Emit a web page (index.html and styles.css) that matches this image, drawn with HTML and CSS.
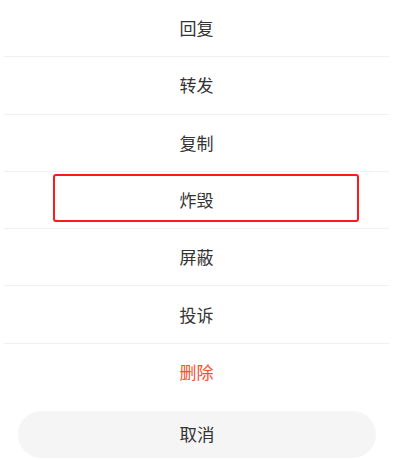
FILE: index.html
```html
<!DOCTYPE html>
<html lang="zh-CN">
<head>
<meta charset="utf-8">
<link rel="stylesheet" href="styles.css">
</head>
<body>
<div class="sheet">
  <ul class="menu">
    <li class="item">回复</li>
    <li class="item">转发</li>
    <li class="item">复制</li>
    <li class="item">炸毁</li>
    <li class="item">屏蔽</li>
    <li class="item">投诉</li>
    <li class="item danger">删除</li>
  </ul>
  <div class="cancel">取消</div>
  <div class="highlight"></div>
</div>
</body>
</html>
```
FILE: styles.css
```css
html, body {
  margin: 0;
  padding: 0;
  background: #ffffff;
}
body {
  font-family: "Noto Sans CJK SC", "Noto Sans", sans-serif;
  color: #333333;
}
.sheet {
  position: relative;
  width: 385px;
  height: 460px;
  margin-left: 4px;
}
.menu {
  list-style: none;
  margin: 0;
  padding: 0;
}
.item {
  height: 56.3px;
  padding-bottom: 1px;
  box-sizing: content-box;
  border-bottom: 1px solid #f1f1f1;
  display: flex;
  align-items: center;
  justify-content: center;
  font-size: 17px;
}
.item:not(.danger) {
  height: 55.3px;
}
.item.danger {
  border-bottom: none;
  color: #f5502f;
  height: 56px;
}
.cancel {
  margin: 10px 13px 0 14px;
  height: 45px;
  padding-bottom: 2px;
  border-radius: 24px;
  background: #f5f5f5;
  display: flex;
  align-items: center;
  justify-content: center;
  font-size: 17.5px;
}
.highlight {
  position: absolute;
  left: 49px;
  top: 174px;
  width: 302px;
  height: 44px;
  border: 2px solid #ff1a1a;
  border-radius: 3px;
}
```
